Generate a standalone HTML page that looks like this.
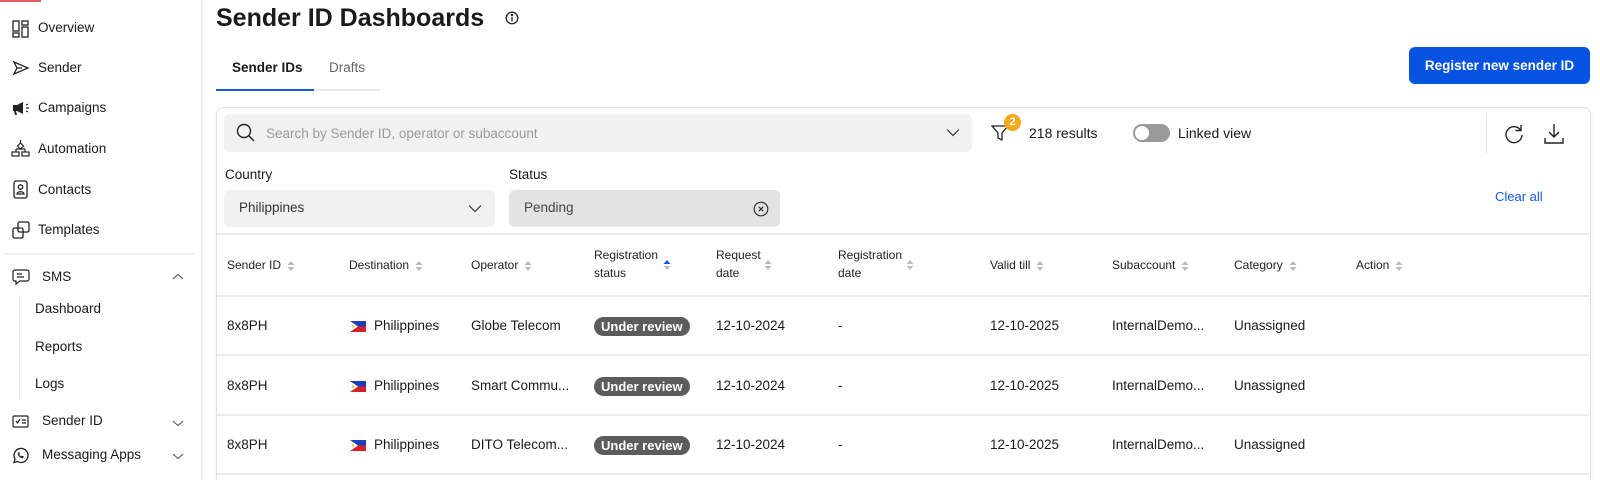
<!DOCTYPE html>
<html><head><meta charset="utf-8"><style>
*{margin:0;padding:0;box-sizing:border-box}
html{width:1600px;height:480px;overflow:hidden}
body{width:1600px;height:480px;overflow:hidden;background:#fff;font-family:"Liberation Sans",sans-serif;color:#1a1a1a;position:relative}
.a{position:absolute;white-space:nowrap}
.t{font-size:13.5px;line-height:16px;transform:translateY(-8px)}
.h{font-size:12px;line-height:18px;color:#222}
.ic{position:absolute}
.sort{display:inline-block;vertical-align:middle;margin-left:6px}
.pill{position:absolute;background:#5c5c5c;color:#fff;font-size:13px;line-height:19px;height:19px;padding:0 7px;border-radius:10px;font-weight:bold}
.flag{position:absolute;width:16px;height:11px}
.ln{position:absolute;left:217px;width:1372px;height:2px;background:#ececec}
</style></head><body>
<div class="a" style="left:0;top:0;width:41px;height:2px;background:#e06060"></div>
<div class="a" style="left:201px;top:0;width:2px;height:480px;background:#f0f0f0"></div>

<svg class="ic" style="left:12px;top:20px" width="18" height="18" viewBox="0 0 18 18" fill="none" stroke="#222" stroke-width="1.3"><rect x="1" y="1" width="6" height="10"/><rect x="1" y="13" width="6" height="4"/><rect x="10" y="1" width="6" height="4"/><rect x="10" y="7" width="6" height="10"/></svg>
<svg class="ic" style="left:12px;top:60px" width="18" height="16" viewBox="0 0 18 16" fill="none" stroke="#222" stroke-width="1.3"><path d="M2 2 L16 8 L2 14 L5 8 Z M5 8 H10"/></svg>
<svg class="ic" style="left:11px;top:100px" width="20" height="16" viewBox="0 0 20 16" fill="#222"><path d="M2 5 H6 L12 2 V14 L6 11 H5 L6 15 H4 L3 11 H2 Z"/><path d="M15 5 L17 4 M15 8 H18 M15 11 L17 12" stroke="#222" stroke-width="1.2"/></svg>
<svg class="ic" style="left:11px;top:139px" width="19" height="19" viewBox="0 0 19 19" fill="none" stroke="#222" stroke-width="1.2"><path d="M9.5 1 V4 M6.5 7 L9.5 4 L12.5 7 L9.5 10 Z M5 10 L9.5 10 L14 10 M5 10 V13 M14 10 V13"/><rect x="1" y="13" width="7" height="4"/><rect x="11" y="13" width="7" height="4"/></svg>
<svg class="ic" style="left:12px;top:180px" width="17" height="19" viewBox="0 0 17 19" fill="none" stroke="#222" stroke-width="1.3"><rect x="2" y="1" width="13" height="17" rx="2"/><circle cx="8.5" cy="7" r="2.2"/><path d="M5 14 C5 11 12 11 12 14 Z"/></svg>
<svg class="ic" style="left:12px;top:221px" width="18" height="18" viewBox="0 0 18 18" fill="none" stroke="#222" stroke-width="1.3"><rect x="6" y="1" width="11" height="10" rx="1.5"/><rect x="1" y="7" width="10" height="10" rx="1.5"/></svg>
<div class="a" style="left:38px;top:28px"><span class="t" style="display:block">Overview</span></div>
<div class="a" style="left:38px;top:68px"><span class="t" style="display:block">Sender</span></div>
<div class="a" style="left:38px;top:108px"><span class="t" style="display:block">Campaigns</span></div>
<div class="a" style="left:38px;top:149px"><span class="t" style="display:block">Automation</span></div>
<div class="a" style="left:38px;top:190px"><span class="t" style="display:block">Contacts</span></div>
<div class="a" style="left:38px;top:230px"><span class="t" style="display:block">Templates</span></div>
<div class="a" style="left:4px;top:253px;width:190px;height:2px;background:#f0f0f0"></div>
<svg class="ic" style="left:12px;top:268px" width="18" height="18" viewBox="0 0 18 18" fill="none" stroke="#222" stroke-width="1.2"><path d="M3 2 H15 A2 2 0 0 1 17 4 V11 A2 2 0 0 1 15 13 H8 L4 16 V13 H3 A2 2 0 0 1 1 11 V4 A2 2 0 0 1 3 2 Z M5 6 H10 M5 9 H12"/></svg>
<div class="a" style="left:42px;top:277px"><span class="t" style="display:block">SMS</span></div>
<svg class="ic" style="left:172px;top:273px" width="12" height="8" viewBox="0 0 12 8" fill="none" stroke="#555" stroke-width="1.1"><path d="M1 6 L6 1.5 L11 6"/></svg>
<div class="a" style="left:19px;top:295px;width:1px;height:105px;background:#eee"></div>
<div class="a" style="left:35px;top:309px"><span class="t" style="display:block">Dashboard</span></div>
<div class="a" style="left:35px;top:347px"><span class="t" style="display:block">Reports</span></div>
<div class="a" style="left:35px;top:384px"><span class="t" style="display:block">Logs</span></div>
<svg class="ic" style="left:12px;top:415px" width="17" height="13" viewBox="0 0 17 13" fill="none" stroke="#222" stroke-width="1.2"><rect x="1" y="1" width="15" height="11" rx="1"/><path d="M4 6 L5.5 8 L8 4 M10 5 H14 M10 8 H14"/></svg>
<div class="a" style="left:42px;top:421px"><span class="t" style="display:block">Sender ID</span></div>
<svg class="ic" style="left:172px;top:419px" width="12" height="8" viewBox="0 0 12 8" fill="none" stroke="#555" stroke-width="1.1"><path d="M1 2 L6 6.5 L11 2"/></svg>
<svg class="ic" style="left:12px;top:447px" width="17" height="17" viewBox="0 0 17 17" fill="none" stroke="#222" stroke-width="1.3"><path d="M2 15.5 L3 12 A7 7 0 1 1 5.5 14.5 Z"/><path d="M6 6 C6 9 8 11 11 11 L11.5 9.5 L10 9 L9 9.5 C8 9 7.5 8.5 7 7.5 L7.5 6.5 L7 5 Z" fill="#222" stroke-width="0.5"/></svg>
<div class="a" style="left:42px;top:455px"><span class="t" style="display:block">Messaging Apps</span></div>
<svg class="ic" style="left:172px;top:452px" width="12" height="8" viewBox="0 0 12 8" fill="none" stroke="#555" stroke-width="1.1"><path d="M1 2 L6 6.5 L11 2"/></svg>

<div class="a" style="left:216px;top:3px;font-size:25px;line-height:30px;font-weight:bold;color:#1a1a1a">Sender ID Dashboards</div>
<svg class="ic" style="left:505px;top:11px" width="14" height="14" viewBox="0 0 14 14" fill="none" stroke="#222" stroke-width="1.3"><circle cx="7" cy="7" r="5.8"/><path d="M7 6 V10.5"/><circle cx="7" cy="4" r="0.6" fill="#222"/></svg>
<div class="a" style="left:232px;top:60px;font-size:13.5px;line-height:16px;font-weight:bold">Sender IDs</div>
<div class="a" style="left:329px;top:60px;font-size:13.5px;line-height:16px;color:#666">Drafts</div>
<div class="a" style="left:216px;top:89px;width:164px;height:2px;background:#e8e8e8"></div>
<div class="a" style="left:216px;top:89px;width:98px;height:2px;background:#1458e6"></div>
<div class="a" style="left:1409px;top:47px;width:181px;height:37px;background:#0553e0;border-radius:6px;color:#fff;font-size:13.5px;font-weight:bold;line-height:37px;text-align:center">Register new sender ID</div>

<div class="a" style="left:216px;top:107px;width:1375px;height:380px;border:1px solid #e2e2e2;border-radius:8px;box-shadow:0 1px 3px rgba(0,0,0,.08)"></div>
<div class="a" style="left:224px;top:114px;width:748px;height:38px;background:#f1f1f1;border-radius:6px"></div>
<svg class="ic" style="left:236px;top:123px" width="20" height="20" viewBox="0 0 20 20" fill="none" stroke="#222" stroke-width="1.4"><circle cx="8" cy="8" r="6.5"/><path d="M12.8 12.8 L18 18"/></svg>
<div class="a" style="left:266px;top:126px;font-size:13.5px;line-height:16px;color:#9a9a9a">Search by Sender ID, operator or subaccount</div>
<svg class="ic" style="left:946px;top:128px" width="14" height="9" viewBox="0 0 14 9" fill="none" stroke="#333" stroke-width="1.2"><path d="M1 1.5 L7 7.5 L13 1.5"/></svg>
<svg class="ic" style="left:991px;top:124px" width="18" height="18" viewBox="0 0 18 18" fill="none" stroke="#222" stroke-width="1.3"><path d="M1 2 H17 L11 9 V16 L7 14 V9 Z"/></svg>
<div class="a" style="left:1004px;top:114px;width:17px;height:17px;border-radius:50%;background:#f6a91c;color:#fff;font-size:11px;font-weight:bold;line-height:17px;text-align:center">2</div>
<div class="a" style="left:1029px;top:125px;font-size:14px;line-height:16px">218 results</div>
<div class="a" style="left:1133px;top:124px;width:37px;height:18px;border-radius:9px;background:#9a9a9a"></div>
<div class="a" style="left:1135px;top:126px;width:14px;height:14px;border-radius:50%;background:#fff"></div>
<div class="a" style="left:1178px;top:125px;font-size:14px;line-height:16px">Linked view</div>
<div class="a" style="left:1486px;top:114px;width:1px;height:39px;background:#e4e4e4"></div>
<svg class="ic" style="left:1503px;top:123px" width="22" height="22" viewBox="0 0 22 22" fill="none" stroke="#222" stroke-width="1.4"><path d="M17.5 7 A8 8 0 1 0 19 12"/><path d="M18 2 V7.5 H12.5"/></svg>
<svg class="ic" style="left:1544px;top:123px" width="20" height="22" viewBox="0 0 20 22" fill="none" stroke="#222" stroke-width="1.4"><path d="M10 1 V14 M5 9 L10 14 L15 9 M1 15 V20 H19 V15"/></svg>

<div class="a" style="left:225px;top:167px;font-size:13.5px;line-height:16px">Country</div>
<div class="a" style="left:509px;top:167px;font-size:13.5px;line-height:16px">Status</div>
<div class="a" style="left:224px;top:190px;width:271px;height:37px;background:#f1f1f1;border-radius:6px"></div>
<div class="a" style="left:239px;top:200px;font-size:13.5px;line-height:16px;color:#333">Philippines</div>
<svg class="ic" style="left:468px;top:204px" width="14" height="9" viewBox="0 0 14 9" fill="none" stroke="#333" stroke-width="1.2"><path d="M1 1.5 L7 7.5 L13 1.5"/></svg>
<div class="a" style="left:509px;top:190px;width:271px;height:37px;background:#e3e3e3;border-radius:6px"></div>
<div class="a" style="left:524px;top:200px;font-size:13.5px;line-height:16px;color:#444">Pending</div>
<svg class="ic" style="left:753px;top:201px" width="16" height="16" viewBox="0 0 16 16" fill="none" stroke="#333" stroke-width="1.2"><circle cx="8" cy="8" r="6.8"/><path d="M5.8 5.8 L10.2 10.2 M10.2 5.8 L5.8 10.2"/></svg>
<div class="a" style="left:1495px;top:189px;font-size:13px;line-height:16px;color:#1458e6">Clear all</div>

<div class="ln" style="top:233px"></div>
<div class="ln" style="top:295px"></div>
<div class="ln" style="top:354px"></div>
<div class="ln" style="top:414px"></div>
<div class="ln" style="top:473px"></div>

<div class="a h" style="left:227px;top:256px">Sender ID<svg class="sort" width="8" height="12" viewBox="0 0 8 12"><path d="M4 1 L7.5 5 H0.5 Z M4 11 L7.5 7 H0.5 Z" fill="#bbb"/></svg></div>
<div class="a h" style="left:349px;top:256px">Destination<svg class="sort" width="8" height="12" viewBox="0 0 8 12"><path d="M4 1 L7.5 5 H0.5 Z M4 11 L7.5 7 H0.5 Z" fill="#bbb"/></svg></div>
<div class="a h" style="left:471px;top:256px">Operator<svg class="sort" width="8" height="12" viewBox="0 0 8 12"><path d="M4 1 L7.5 5 H0.5 Z M4 11 L7.5 7 H0.5 Z" fill="#bbb"/></svg></div>
<div class="a h" style="left:594px;top:246px">Registration<br>status</div>
<svg class="ic" style="left:663px;top:259px" width="8" height="12" viewBox="0 0 8 12"><path d="M4 1 L7.5 5 H0.5 Z" fill="#1458e6"/><path d="M4 11 L7.5 7 H0.5 Z" fill="#bbb"/></svg>
<div class="a h" style="left:716px;top:246px">Request<br>date</div>
<svg class="ic" style="left:764px;top:259px" width="8" height="12" viewBox="0 0 8 12"><path d="M4 1 L7.5 5 H0.5 Z M4 11 L7.5 7 H0.5 Z" fill="#bbb"/></svg>
<div class="a h" style="left:838px;top:246px">Registration<br>date</div>
<svg class="ic" style="left:906px;top:259px" width="8" height="12" viewBox="0 0 8 12"><path d="M4 1 L7.5 5 H0.5 Z M4 11 L7.5 7 H0.5 Z" fill="#bbb"/></svg>
<div class="a h" style="left:990px;top:256px">Valid till<svg class="sort" width="8" height="12" viewBox="0 0 8 12"><path d="M4 1 L7.5 5 H0.5 Z M4 11 L7.5 7 H0.5 Z" fill="#bbb"/></svg></div>
<div class="a h" style="left:1112px;top:256px">Subaccount<svg class="sort" width="8" height="12" viewBox="0 0 8 12"><path d="M4 1 L7.5 5 H0.5 Z M4 11 L7.5 7 H0.5 Z" fill="#bbb"/></svg></div>
<div class="a h" style="left:1234px;top:256px">Category<svg class="sort" width="8" height="12" viewBox="0 0 8 12"><path d="M4 1 L7.5 5 H0.5 Z M4 11 L7.5 7 H0.5 Z" fill="#bbb"/></svg></div>
<div class="a h" style="left:1356px;top:256px">Action<svg class="sort" width="8" height="12" viewBox="0 0 8 12"><path d="M4 1 L7.5 5 H0.5 Z M4 11 L7.5 7 H0.5 Z" fill="#bbb"/></svg></div>

<div class="a" style="left:227px;top:318px;font-size:13.5px;line-height:16px">8x8PH</div>
<svg class="flag" style="left:350px;top:321px" viewBox="0 0 16 11"><rect width="16" height="5.5" fill="#1a3fb8"/><rect y="5.5" width="16" height="5.5" fill="#d8202a"/><path d="M0 0 L8 5.5 L0 11 Z" fill="#fff"/><circle cx="3" cy="5.5" r="1.2" fill="#f3c400"/></svg>
<div class="a" style="left:374px;top:318px;font-size:13.5px;line-height:16px">Philippines</div>
<div class="a" style="left:471px;top:318px;font-size:13.5px;line-height:16px">Globe Telecom</div>
<div class="pill" style="left:594px;top:317px">Under review</div>
<div class="a" style="left:716px;top:318px;font-size:13.5px;line-height:16px">12-10-2024</div>
<div class="a" style="left:838px;top:318px;font-size:13.5px;line-height:16px">-</div>
<div class="a" style="left:990px;top:318px;font-size:13.5px;line-height:16px">12-10-2025</div>
<div class="a" style="left:1112px;top:318px;font-size:13.5px;line-height:16px">InternalDemo...</div>
<div class="a" style="left:1234px;top:318px;font-size:13.5px;line-height:16px">Unassigned</div>

<div class="a" style="left:227px;top:378px;font-size:13.5px;line-height:16px">8x8PH</div>
<svg class="flag" style="left:350px;top:381px" viewBox="0 0 16 11"><rect width="16" height="5.5" fill="#1a3fb8"/><rect y="5.5" width="16" height="5.5" fill="#d8202a"/><path d="M0 0 L8 5.5 L0 11 Z" fill="#fff"/><circle cx="3" cy="5.5" r="1.2" fill="#f3c400"/></svg>
<div class="a" style="left:374px;top:378px;font-size:13.5px;line-height:16px">Philippines</div>
<div class="a" style="left:471px;top:378px;font-size:13.5px;line-height:16px">Smart Commu...</div>
<div class="pill" style="left:594px;top:377px">Under review</div>
<div class="a" style="left:716px;top:378px;font-size:13.5px;line-height:16px">12-10-2024</div>
<div class="a" style="left:838px;top:378px;font-size:13.5px;line-height:16px">-</div>
<div class="a" style="left:990px;top:378px;font-size:13.5px;line-height:16px">12-10-2025</div>
<div class="a" style="left:1112px;top:378px;font-size:13.5px;line-height:16px">InternalDemo...</div>
<div class="a" style="left:1234px;top:378px;font-size:13.5px;line-height:16px">Unassigned</div>

<div class="a" style="left:227px;top:437px;font-size:13.5px;line-height:16px">8x8PH</div>
<svg class="flag" style="left:350px;top:440px" viewBox="0 0 16 11"><rect width="16" height="5.5" fill="#1a3fb8"/><rect y="5.5" width="16" height="5.5" fill="#d8202a"/><path d="M0 0 L8 5.5 L0 11 Z" fill="#fff"/><circle cx="3" cy="5.5" r="1.2" fill="#f3c400"/></svg>
<div class="a" style="left:374px;top:437px;font-size:13.5px;line-height:16px">Philippines</div>
<div class="a" style="left:471px;top:437px;font-size:13.5px;line-height:16px">DITO Telecom...</div>
<div class="pill" style="left:594px;top:436px">Under review</div>
<div class="a" style="left:716px;top:437px;font-size:13.5px;line-height:16px">12-10-2024</div>
<div class="a" style="left:838px;top:437px;font-size:13.5px;line-height:16px">-</div>
<div class="a" style="left:990px;top:437px;font-size:13.5px;line-height:16px">12-10-2025</div>
<div class="a" style="left:1112px;top:437px;font-size:13.5px;line-height:16px">InternalDemo...</div>
<div class="a" style="left:1234px;top:437px;font-size:13.5px;line-height:16px">Unassigned</div>
</body></html>
